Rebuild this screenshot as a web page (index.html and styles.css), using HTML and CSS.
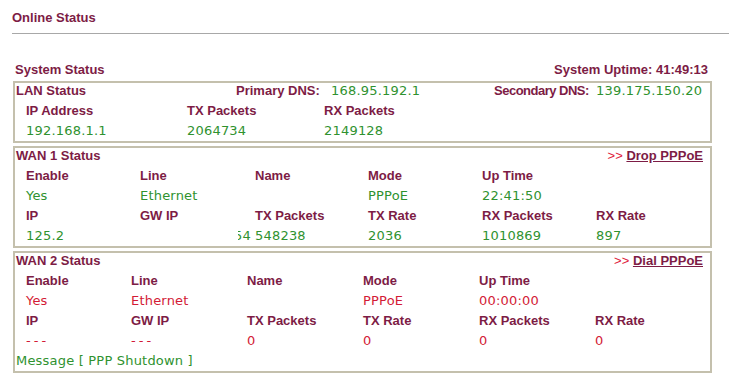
FILE: index.html
```html
<!DOCTYPE html>
<html lang="en">
<head>
    <meta charset="UTF-8">
    <title>Online Status</title>
    <link rel="stylesheet" href="styles.css">
</head>
<body>
    <div class="title">Online Status</div>
    <div class="rule"></div>
    <div class="content">
        <div class="sys-head">
            <span>System Status</span>
            <span>System Uptime: 41:49:13</span>
        </div>

        <div class="box">
            <div class="box-head lan-head">
                <span>LAN Status</span>
                <span>Primary DNS:</span>
                <span class="val">168.95.192.1</span>
                <span class="tight">Secondary DNS:</span>
                <span class="val">139.175.150.20</span>
            </div>
            <div class="grid lan-grid">
                <span class="lbl">IP Address</span>
                <span class="lbl">TX Packets</span>
                <span class="lbl">RX Packets</span>
                <span class="val">192.168.1.1</span>
                <span class="val">2064734</span>
                <span class="val">2149128</span>
            </div>
        </div>

        <div class="box">
            <div class="box-head">
                <span>WAN 1 Status</span>
                <span class="action"><span class="arrows">&gt;&gt;</span> <a href="#">Drop PPPoE</a></span>
            </div>
            <div class="grid wan1-grid">
                <span class="lbl">Enable</span>
                <span class="lbl">Line</span>
                <span class="lbl">Name</span>
                <span class="lbl">Mode</span>
                <span class="lbl">Up Time</span>
                <span></span>
                <span class="val">Yes</span>
                <span class="val">Ethernet</span>
                <span class="val"></span>
                <span class="val">PPPoE</span>
                <span class="val">22:41:50</span>
                <span></span>
                <span class="lbl">IP</span>
                <span class="lbl">GW IP</span>
                <span class="lbl">TX Packets</span>
                <span class="lbl">TX Rate</span>
                <span class="lbl">RX Packets</span>
                <span class="lbl">RX Rate</span>
                <span class="val"><span class="cut-r">125.21</span></span>
                <span class="val"></span>
                <span class="val"><span class="cut-l">54</span>548238</span>
                <span class="val">2036</span>
                <span class="val">1010869</span>
                <span class="val">897</span>
            </div>
        </div>

        <div class="box">
            <div class="box-head">
                <span>WAN 2 Status</span>
                <span class="action"><span class="arrows">&gt;&gt;</span> <a href="#">Dial PPPoE</a></span>
            </div>
            <div class="grid wan2-grid">
                <span class="lbl">Enable</span>
                <span class="lbl">Line</span>
                <span class="lbl">Name</span>
                <span class="lbl">Mode</span>
                <span class="lbl">Up Time</span>
                <span></span>
                <span class="val off">Yes</span>
                <span class="val off">Ethernet</span>
                <span class="val off"></span>
                <span class="val off">PPPoE</span>
                <span class="val off">00:00:00</span>
                <span></span>
                <span class="lbl">IP</span>
                <span class="lbl">GW IP</span>
                <span class="lbl">TX Packets</span>
                <span class="lbl">TX Rate</span>
                <span class="lbl">RX Packets</span>
                <span class="lbl">RX Rate</span>
                <span class="val off dash">---</span>
                <span class="val off dash">---</span>
                <span class="val off">0</span>
                <span class="val off">0</span>
                <span class="val off">0</span>
                <span class="val off">0</span>
            </div>
            <div class="message val">Message [ PPP Shutdown ]</div>
        </div>
    </div>
</body>
</html>
```

FILE: styles.css
```css
body {
    margin: 0;
    font-family: "Liberation Sans", Arial, sans-serif;
    font-size: 13px;
    color: #7d1c45;
    background-color: #fff;
}
.title {
    margin-top: 8px;
    padding-left: 12px;
    line-height: 20px;
    font-weight: bold;
}
.rule {
    margin: 5px 0 0 12px;
    height: 1px;
    background-color: #a8a8a8;
}
.content {
    width: 699px;
    margin: 26px 0 0 13px;
}
.sys-head {
    display: flex;
    justify-content: space-between;
    line-height: 20px;
    font-weight: bold;
    padding: 0 4px 0 2px;
    margin-bottom: 1px;
}
.box {
    border: 2px solid #c4c0ad;
}
.box + .box {
    margin-top: 3px;
}
.box-head {
    display: flex;
    justify-content: space-between;
    height: 18px;
    line-height: 16px;
    padding: 0 7px 0 1px;
    font-weight: bold;
}
.lan-head {
    display: grid;
    justify-content: start;
    grid-template-columns: 220px 95px 163px 102px auto;
    padding-right: 0;
    white-space: nowrap;
}
.tight {
    letter-spacing: -0.5px;
}
.action {
    font-weight: bold;
}
.arrows {
    font-weight: normal;
    color: #e0203a;
}
.action a {
    color: #7d1c45;
    text-decoration: underline;
}
.grid {
    display: grid;
    grid-auto-rows: 20px;
    line-height: 20px;
    padding-left: 11px;
    white-space: nowrap;
}
.lan-grid {
    grid-template-columns: 161px 137px auto;
}
.wan1-grid {
    grid-template-columns: 114px 115px 113px 114px 114px auto;
}
.wan2-grid {
    grid-template-columns: 105px 116px 116px 116px 116px auto;
}
.lbl {
    font-weight: bold;
}
.val {
    font-family: "DejaVu Sans", Verdana, sans-serif;
    font-weight: normal;
    letter-spacing: 0.2px;
    color: #2f922f;
}
.val.off {
    color: #d31b36;
}
.dash {
    letter-spacing: 3px;
}
.cut-r {
    display: inline-block;
    width: 39px;
    overflow: hidden;
    vertical-align: top;
}
.cut-l {
    display: inline-block;
    width: 13px;
    margin: 0 4px 0 -17px;
    overflow: hidden;
    direction: rtl;
    vertical-align: top;
}
.message {
    line-height: 20px;
    padding-left: 1px;
}
```
